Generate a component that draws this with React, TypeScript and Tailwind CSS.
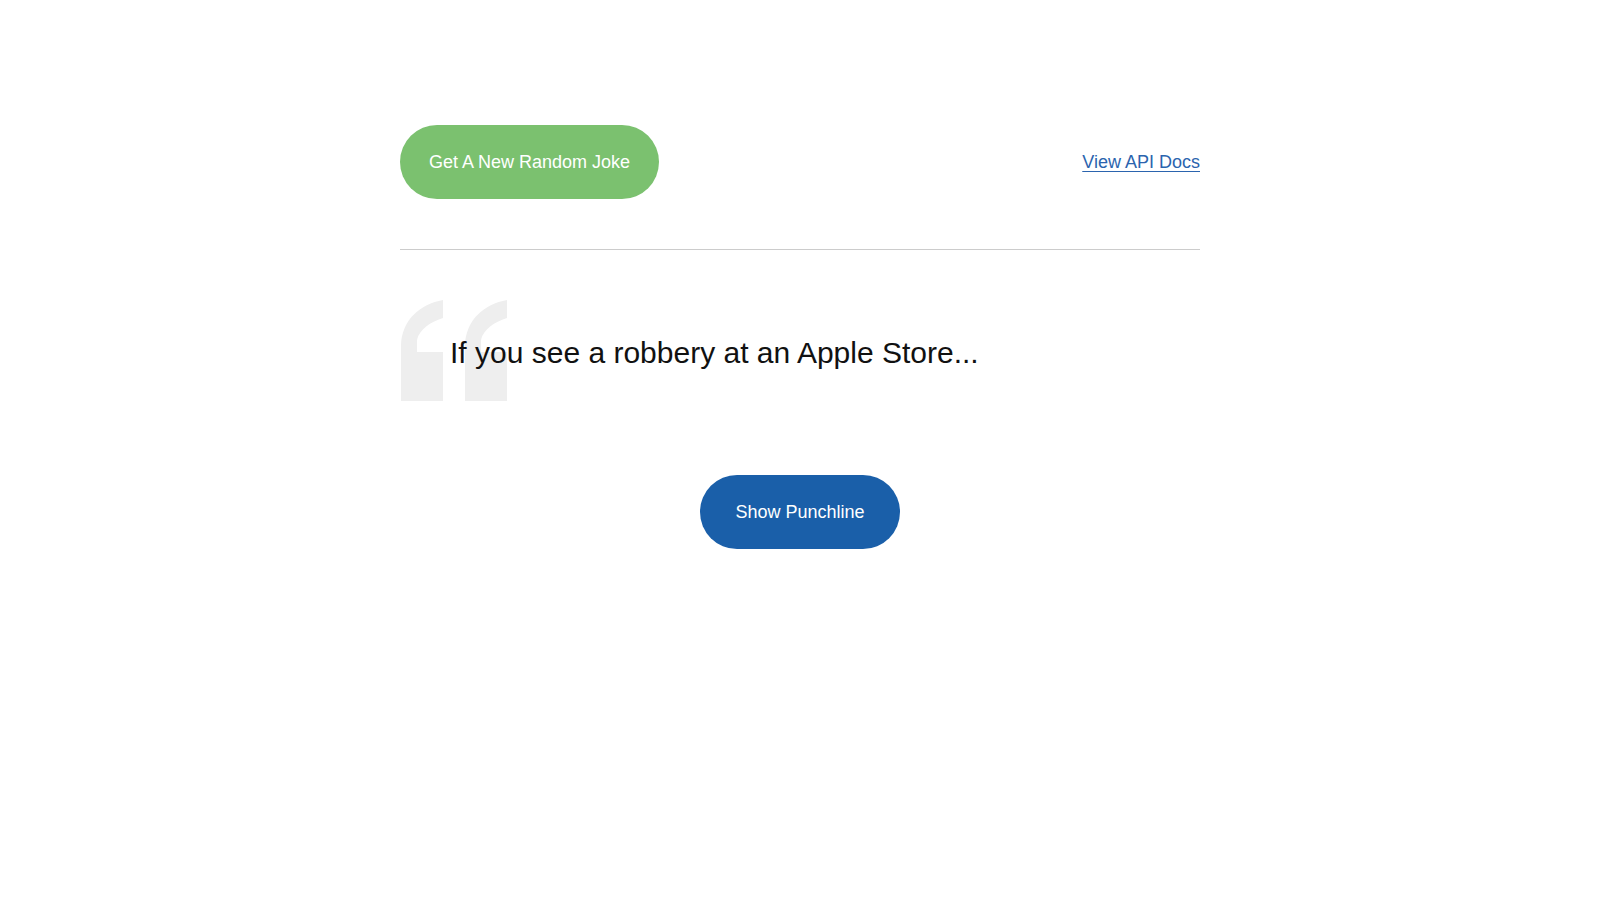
import React, { useState } from 'react';

function QuoteMark() {
  const mark = 'M43 0 L43 18 C30 22 19 30 17 40 L17 52 L43 52 L43 101 L1 101 L1 45 C2 20 20 4 43 0 Z';
  return (
    <svg width="108" height="101" viewBox="0 0 108 101" className="absolute left-0 top-0">
      <path d={mark} fill="#eeeeee" />
      <path d={mark} fill="#eeeeee" transform="translate(64 0)" />
    </svg>
  );
}

export default function App() {
  const [shown, setShown] = useState(false);
  return (
    <div className="min-h-screen bg-white" style={{ fontFamily: '"Liberation Sans", Arial, sans-serif' }}>
      <div className="w-[800px] mx-auto pt-[125px]">
        <div className="flex items-center justify-between">
          <button type="button" className="h-[74px] px-[29px] rounded-full bg-[#7bc16f] text-white text-[18px]">
            Get A New Random Joke
          </button>
          <a href="#" className="text-[18px] text-[#2b64ae] underline underline-offset-[3px] decoration-1">View API Docs</a>
        </div>
        <div className="mt-[50px] border-t border-[#cccccc]" />
        <div className="relative mt-[50px] h-[101px] pl-[50px] pt-[35px]">
          <QuoteMark />
          <p className="relative text-[30px] leading-[36px] text-[#111111]">If you see a robbery at an Apple Store...</p>
        </div>
        {shown && <p className="text-[24px] text-[#111111] text-center mt-4">Does that make you an iWitness?</p>}
        <div className="flex justify-center mt-[74px]">
          <button type="button" onClick={() => setShown(true)} className="h-[74px] px-[35px] rounded-full bg-[#1a5fa9] text-white text-[18px]">
            Show Punchline
          </button>
        </div>
      </div>
    </div>
  );
}
